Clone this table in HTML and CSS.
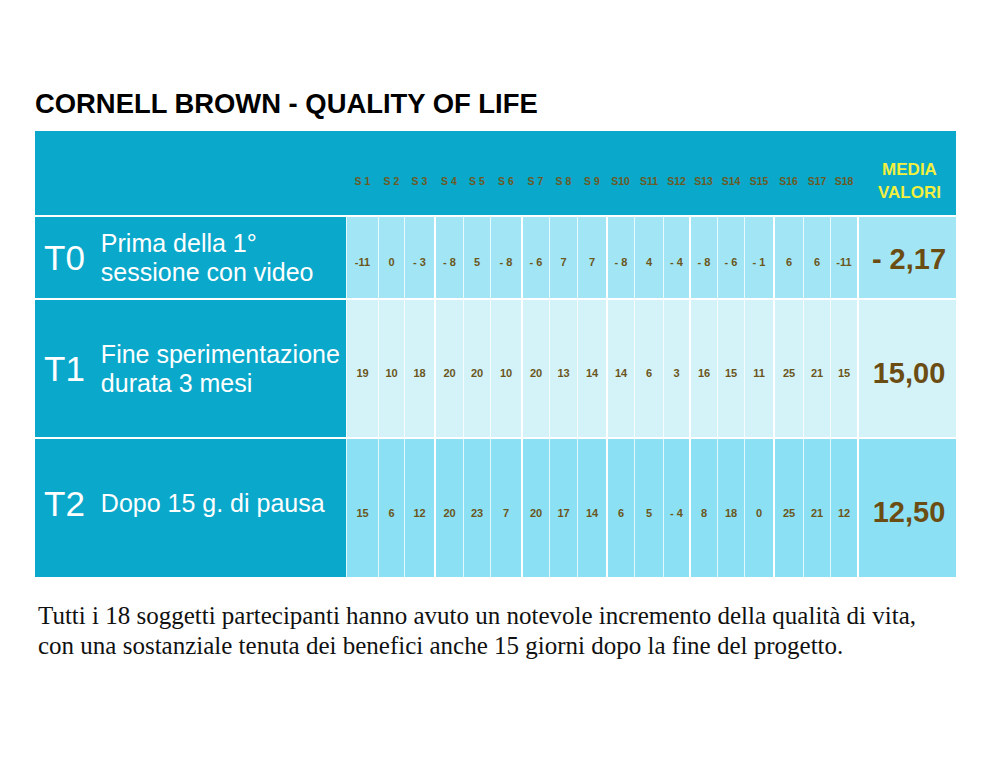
FILE: index.html
```html
<!DOCTYPE html>
<html lang="it">
<head>
<meta charset="utf-8">
<title>Cornell Brown - Quality of Life</title>
<link rel="stylesheet" href="styles.css">
</head>
<body>
<div class="page">
  <h1 class="title">CORNELL BROWN - QUALITY OF LIFE</h1>
  <div class="table">
    <div class="hd hd-label"></div>
    <div class="hd s">S 1</div>
    <div class="hd s">S 2</div>
    <div class="hd s">S 3</div>
    <div class="hd s">S 4</div>
    <div class="hd s">S 5</div>
    <div class="hd s">S 6</div>
    <div class="hd s">S 7</div>
    <div class="hd s">S 8</div>
    <div class="hd s">S 9</div>
    <div class="hd s">S10</div>
    <div class="hd s">S11</div>
    <div class="hd s">S12</div>
    <div class="hd s">S13</div>
    <div class="hd s">S14</div>
    <div class="hd s">S15</div>
    <div class="hd s">S16</div>
    <div class="hd s">S17</div>
    <div class="hd s">S18</div>
    <div class="hd media-hd">MEDIA<br>VALORI</div>

    <div class="label"><span class="tag">T0</span><span class="desc">Prima della 1°<br>sessione con video</span></div>
    <div class="v r0">-11</div>
    <div class="v r0">0</div>
    <div class="v r0">- 3</div>
    <div class="v r0 g">- 8</div>
    <div class="v r0">5</div>
    <div class="v r0">- 8</div>
    <div class="v r0 g">- 6</div>
    <div class="v r0">7</div>
    <div class="v r0">7</div>
    <div class="v r0 g">- 8</div>
    <div class="v r0">4</div>
    <div class="v r0">- 4</div>
    <div class="v r0 g">- 8</div>
    <div class="v r0">- 6</div>
    <div class="v r0">- 1</div>
    <div class="v r0 g">6</div>
    <div class="v r0">6</div>
    <div class="v r0">-11</div>
    <div class="avg r0 g avg-t0">- 2,17</div>

    <div class="label"><span class="tag">T1</span><span class="desc">Fine sperimentazione<br>durata 3 mesi</span></div>
    <div class="v r1">19</div>
    <div class="v r1">10</div>
    <div class="v r1">18</div>
    <div class="v r1 g">20</div>
    <div class="v r1">20</div>
    <div class="v r1">10</div>
    <div class="v r1 g">20</div>
    <div class="v r1">13</div>
    <div class="v r1">14</div>
    <div class="v r1 g">14</div>
    <div class="v r1">6</div>
    <div class="v r1">3</div>
    <div class="v r1 g">16</div>
    <div class="v r1">15</div>
    <div class="v r1">11</div>
    <div class="v r1 g">25</div>
    <div class="v r1">21</div>
    <div class="v r1">15</div>
    <div class="avg r1 g">15,00</div>

    <div class="label label-t2"><span class="tag">T2</span><span class="desc">Dopo 15 g. di pausa</span></div>
    <div class="v r2">15</div>
    <div class="v r2">6</div>
    <div class="v r2">12</div>
    <div class="v r2 g">20</div>
    <div class="v r2">23</div>
    <div class="v r2">7</div>
    <div class="v r2 g">20</div>
    <div class="v r2">17</div>
    <div class="v r2">14</div>
    <div class="v r2 g">6</div>
    <div class="v r2">5</div>
    <div class="v r2">- 4</div>
    <div class="v r2 g">8</div>
    <div class="v r2">18</div>
    <div class="v r2">0</div>
    <div class="v r2 g">25</div>
    <div class="v r2">21</div>
    <div class="v r2">12</div>
    <div class="avg r2 g">12,50</div>
  </div>
  <p class="note">Tutti i 18 soggetti partecipanti hanno avuto un notevole incremento della qualità di vita,<br>con una sostanziale tenuta dei benefici anche 15 giorni dopo la fine del progetto.</p>
</div>
</body>
</html>
```
FILE: styles.css
```css
html, body {
  margin: 0;
  padding: 0;
  background: #ffffff;
}

.page {
  padding: 88px 0 0 35px;
  font-family: "Liberation Sans", Arial, sans-serif;
}

.title {
  margin: 0 0 12px 0;
  font-size: 27.4px;
  font-weight: bold;
  line-height: 31px;
  color: #000000;
}

.table {
  display: grid;
  width: 921px;
  grid-template-columns: 311px 32px 26px 30px 29px 27px 31px 28px 28px 29px 28px 29px 26px 28px 27px 29px 30px 27px 27px 99px;
  grid-template-rows: 84px 81px 137px 138px;
  row-gap: 2px;
  background: #ffffff;
}

.hd {
  background: #0aa8cb;
  box-sizing: border-box;
  display: flex;
  align-items: center;
  justify-content: center;
  padding-top: 16px;
}

.s {
  font-size: 10.5px;
  font-weight: bold;
  color: #6a5a26;
  white-space: nowrap;
  padding-left: 1px;
}

.media-hd {
  font-size: 17px;
  font-weight: bold;
  line-height: 23px;
  color: #f2ef3e;
  text-align: center;
  padding-left: 6px;
}

.label {
  background: #0aa8cb;
  display: flex;
  align-items: center;
  padding-left: 9px;
  color: #ffffff;
}

.label-t2 {
  padding-bottom: 9px;
}

.tag {
  flex: none;
  font-size: 35px;
  margin-right: 16px;
}

.desc {
  font-size: 25px;
  line-height: 28.75px;
}

.v, .avg {
  box-sizing: border-box;
  border-left: 1px solid rgba(255, 255, 255, 0.75);
  display: flex;
  align-items: center;
  justify-content: center;
  padding-top: 9px;
  font-weight: bold;
  white-space: nowrap;
}

.v {
  font-size: 11px;
  color: #6b561c;
}

.g {
  border-left: 2px solid #ffffff;
}

.avg {
  font-size: 29px;
  color: #6b4d14;
  padding-left: 3px;
}

.avg-t0 {
  padding-top: 3px;
}

.r0 { background: #a2e6f5; }
.r1 { background: #d4f3f9; }
.r2 { background: #8be1f3; }

.note {
  margin: 24px 0 0 3px;
  font-family: "Liberation Serif", "Times New Roman", serif;
  font-size: 25px;
  line-height: 30px;
  color: #111111;
}
```
